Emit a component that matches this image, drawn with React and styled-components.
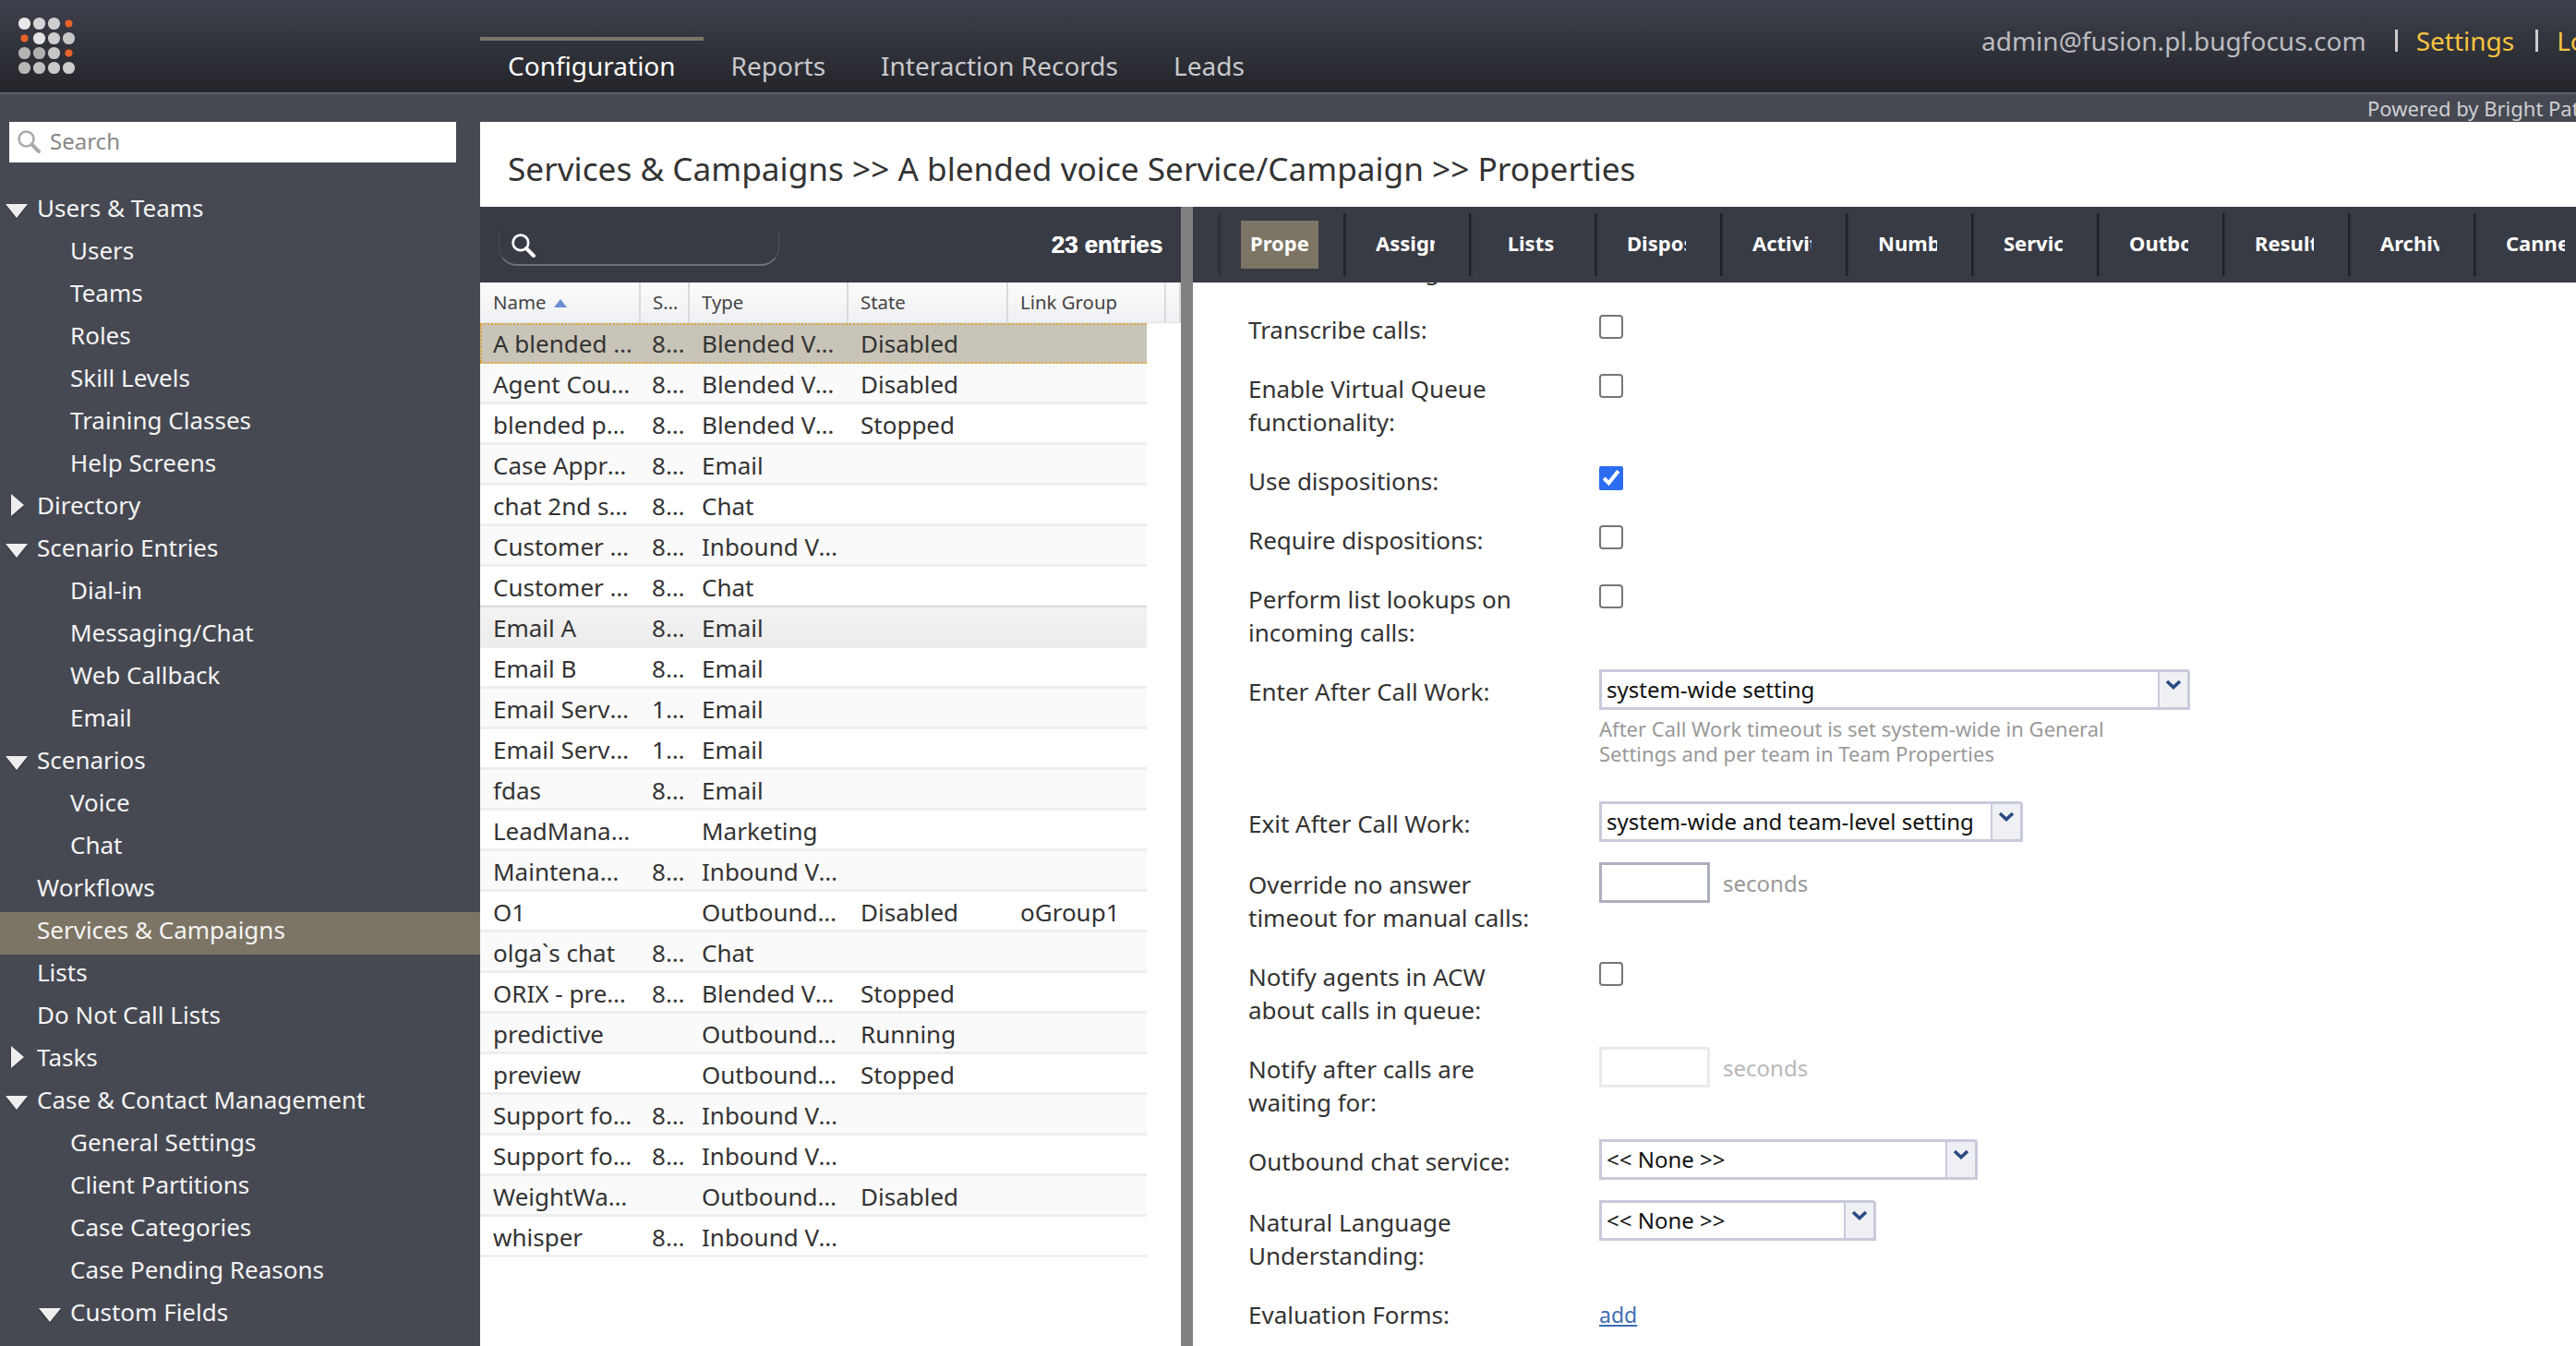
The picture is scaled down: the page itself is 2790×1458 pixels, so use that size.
import React from 'react';
import styled, { createGlobalStyle } from 'styled-components';

const GlobalStyle = createGlobalStyle`
  html, body {
    margin: 0;
    padding: 0;
    height: 100%;
    overflow: hidden;
    background: #fff;
  }
  * {
    box-sizing: border-box;
  }
`;

const Page = styled.div`
  width: 2790px;
  height: 1458px;
  display: flex;
  flex-direction: column;
  overflow: hidden;
  font-family: "Noto Sans", "Open Sans", sans-serif;
  color: #333;
`;

const Header = styled.header`
  flex: none;
  height: 102px;
  display: flex;
  background: linear-gradient(#3e414c, #24252a);
  border-bottom: 2px solid #5b5d64;
`;

const LogoCell = styled.div`
  flex: none;
  width: 520px;
  padding: 17px 0 0 18px;
`;

const Nav = styled.nav`
  flex: none;
  width: 1626px;
  display: flex;
  align-items: flex-end;
`;

const NavTab = styled.div`
  height: 60px;
  padding: 0 30px;
  border-top: 4px solid ${props => (props.$active ? '#7c7565' : 'transparent')};
  font-size: 28px;
  line-height: 55px;
  color: ${props => (props.$active ? '#fff' : '#c9c9cc')};
`;

const UserBox = styled.div`
  flex: none;
  display: flex;
  align-items: center;
  height: 36px;
  margin-top: 26px;
  font-size: 28px;
  white-space: nowrap;
  color: #bcbcc0;
`;

const UserSep = styled.span`
  width: 3px;
  height: 24px;
  margin: 0 20px 0 ${props => props.$gap}px;
  background: #ccc;
`;

const UserLink = styled.span`
  color: #f7c33f;
`;

const Strip = styled.div`
  flex: none;
  height: 30px;
  padding-left: 2564px;
  background: #464952;
  font-size: 22px;
  line-height: 30px;
  white-space: nowrap;
  color: #cfcfd2;
`;

const Body = styled.div`
  flex: 1;
  min-height: 0;
  display: flex;
`;

const Sidebar = styled.aside`
  flex: none;
  width: 520px;
  background: #464952;
  overflow: hidden;
`;

const SideSearch = styled.div`
  height: 44px;
  margin: 0 26px 30px 10px;
  padding: 0 0 3px 8px;
  display: flex;
  align-items: center;
  gap: 10px;
  background: #fff;
  font-size: 24px;
  color: #888;
`;

const TreeRow = styled.div`
  height: 46px;
  padding: 0 0 8px ${props => (props.$depth ? 42 : 6)}px;
  display: flex;
  align-items: center;
  font-size: 26px;
  white-space: nowrap;
  color: #f4f4f4;
  background: ${props => (props.$selected ? '#7c7565' : 'transparent')};
`;

const ArrowSlot = styled.span`
  flex: none;
  width: 34px;
  display: flex;
  align-items: center;
`;

const ArrowDown = styled.span`
  margin-top: 6px;
  border-left: 12px solid transparent;
  border-right: 12px solid transparent;
  border-top: 15px solid #eee;
  filter: drop-shadow(0 1px 1px rgba(0, 0, 0, 0.3));
`;

const ArrowRight = styled.span`
  margin-left: 6px;
  border-top: 12px solid transparent;
  border-bottom: 12px solid transparent;
  border-left: 14px solid #eee;
  filter: drop-shadow(0 1px 1px rgba(0, 0, 0, 0.3));
`;

const Main = styled.main`
  flex: 1;
  min-width: 0;
  display: flex;
  flex-direction: column;
`;

const Title = styled.h1`
  flex: none;
  height: 92px;
  margin: 0;
  padding-left: 30px;
  font-size: 35.2px;
  font-weight: 400;
  line-height: 101px;
  white-space: nowrap;
  color: #333;
`;

const Panes = styled.div`
  flex: 1;
  min-height: 0;
  display: flex;
`;

const ListPane = styled.section`
  flex: none;
  width: 759px;
  display: flex;
  flex-direction: column;
`;

const Splitter = styled.div`
  flex: none;
  width: 13px;
  background: #808080;
`;

const ListToolbar = styled.div`
  flex: none;
  height: 82px;
  padding: 0 20px;
  display: flex;
  align-items: center;
  justify-content: space-between;
  background: #383b44;
`;

const ListSearch = styled.div`
  width: 304px;
  height: 38px;
  margin-top: 8px;
  padding: 2px 0 0 12px;
  display: flex;
  align-items: flex-start;
  border-bottom: 2px solid #6f7177;
  border-left: 1px solid #4a4c54;
  border-right: 1px solid #55575e;
  border-radius: 0 0 20px 20px;
`;

const EntryCount = styled.div`
  font-family: "Liberation Sans", Arial, sans-serif;
  font-size: 25.8px;
  font-weight: 700;
  color: #fff;
  text-shadow: 0.5px 0 0 #fff;
`;

const HeadRow = styled.div`
  flex: none;
  height: 44px;
  display: grid;
  grid-template-columns: 174px 53px 172px 173px 171px 16px;
  background: linear-gradient(#fbfbfb, #f7f7f8 40%, #eef0f3);
  border-bottom: 1px solid #e2e2e2;
`;

const HeadCell = styled.div`
  padding: 0 0 2px 13px;
  display: flex;
  align-items: center;
  gap: 8px;
  overflow: hidden;
  font-size: 20.4px;
  color: #444;
  border-right: 2px solid #d9dadd;

  &:first-child {
    padding-left: 14px;
  }
`;

const HeadText = styled.span`
  overflow: hidden;
  white-space: nowrap;
  text-overflow: ellipsis;
`;

const SortMark = styled.span`
  flex: none;
  margin-top: 3px;
  border-left: 7px solid transparent;
  border-right: 7px solid transparent;
  border-bottom: 9px solid #6a8fd0;
`;

const Rows = styled.div`
  flex: 1;
  width: 722px;
`;

const rowBackground = props => {
  if (props.$selected) return '#c8c4b7';
  if (props.$hover) return 'linear-gradient(#f2f2f2, #ececec)';
  return props.$odd ? '#fafafa' : '#fff';
};

const Row = styled.div`
  position: relative;
  height: ${props => (props.$hover ? '46px' : '44px')};
  margin-top: ${props => (props.$hover ? '-2px' : '0')};
  padding-top: ${props => (props.$selected ? '0' : '2px')};
  display: grid;
  grid-template-columns: 174px 53px 172px 173px 150px;
  align-items: center;
  background: ${rowBackground};
  border-bottom: ${props => (props.$selected ? '2px dotted #e0a83a' : '3px solid #eeeeee')};
  border-top: ${props =>
    props.$selected ? '2px dotted #e0a83a' : props.$hover ? '2px solid #dddddd' : '0 none'};

  &::before {
    content: '';
    position: absolute;
    left: 0;
    top: 0;
    bottom: 0;
    border-left: ${props => (props.$selected ? '2px dotted #e0a83a' : '0 none')};
  }
`;

const Cell = styled.div`
  padding: 0 10px 0 13px;
  overflow: hidden;
  white-space: nowrap;
  text-overflow: ellipsis;
  font-size: 26px;
  line-height: 38px;
  color: #333;

  &:first-child {
    padding: 0 9px 0 14px;
  }

  &:nth-child(2) {
    padding: 0 6px 0 12px;
  }
`;

const DetailPane = styled.section`
  flex: 1;
  min-width: 0;
  display: flex;
  flex-direction: column;
  overflow: hidden;
`;

const TabBar = styled.div`
  position: relative;
  z-index: 1;
  flex: none;
  height: 82px;
  padding-left: 27px;
  display: flex;
  align-items: center;
  background: #383b44;
`;

const Tab = styled.div`
  flex: none;
  width: 136px;
  height: 68px;
  padding-left: 23px;
  display: flex;
  align-items: center;
  border-left: 2px solid ${props => (props.$first ? '#2f3138' : '#1e2024')};
  box-shadow: inset 2px 0 2px -1px rgba(0, 0, 0, 0.25);
`;

const TabBox = styled.div`
  width: 84px;
  height: 52px;
  padding: 0 10px 4px;
  display: flex;
  align-items: center;
  background: ${props => (props.$active ? '#7c7565' : 'transparent')};
`;

const TabText = styled.span`
  display: block;
  width: 64px;
  overflow: hidden;
  text-align: center;
  white-space: nowrap;
  font-size: 22px;
  font-weight: 700;
  color: #fff;
`;

const Scroller = styled.div`
  flex: 1;
  min-height: 0;
  overflow: hidden;
`;

const Form = styled.div`
  margin-top: -31px;
  padding-left: 60px;
  display: flex;
  flex-direction: column;
  gap: 28px;
`;

const FormRow = styled.div`
  display: grid;
  grid-template-columns: 380px 1fr;
`;

const Label = styled.div`
  width: 320px;
  font-size: 26px;
  line-height: 36px;
  color: #333;
`;

const Control = styled.div`
  display: flex;
  flex-direction: column;
  align-items: flex-start;
`;

const Check = styled.input`
  width: 26px;
  height: 26px;
  margin: 2px 0 0;
  accent-color: #2b6cf0;

  &:not(:checked) {
    appearance: none;
    background: #fff;
    border: 2px solid #767676;
    border-radius: 4px;
  }
`;

const SelectBox = styled.div`
  width: ${props => props.$width}px;
  height: 44px;
  margin-top: -6px;
  display: flex;
  align-items: stretch;
  background: #fff;
  border: 3px solid #c8cadc;
  border-radius: 0 4px 0 0;
`;

const SelectValue = styled.div`
  flex: 1;
  padding-left: 5px;
  font-size: 24px;
  line-height: 38px;
  white-space: nowrap;
  color: #111;
`;

const SelectButton = styled.div`
  flex: none;
  width: 32px;
  padding-top: 8px;
  display: flex;
  justify-content: center;
  align-items: flex-start;
  background: #eff0f3;
  border-left: 2px solid #c8cadc;
`;

const Help = styled.div`
  margin: 7px 0 17px;
  font-size: 22px;
  line-height: 26.5px;
  color: #999;
`;

const SecondsRow = styled.div`
  margin-top: -6px;
  display: flex;
  align-items: center;
  gap: 14px;
`;

const NumberBox = styled.div`
  width: 120px;
  height: 44px;
  background: #fff;
  border: 3px solid ${props => (props.$disabled ? '#e9e9ee' : '#adafc0')};
`;

const Seconds = styled.span`
  font-size: 24px;
  color: ${props => (props.$disabled ? '#b8b8b8' : '#999')};
`;

const AddLink = styled.a`
  font-size: 23px;
  line-height: 36px;
  color: #3f6db3;
  text-decoration: underline;
`;

const Logo = () => {
  const orange = ['3-0', '0-1', '3-2'];
  const shade = [
    ['#e8e8e8', '#d4d4d4', '#cfcfcf'],
    [null, '#e4e4e4', '#cdcdcd', '#c6c6c6'],
    ['#b4b4b4', '#b0b0b0', '#c6c6c6'],
    ['#b8b8b8', '#c0c0c0', '#c8c8c8', '#cccccc'],
  ];
  const dots = [];
  for (let y = 0; y < 4; y++) {
    for (let x = 0; x < 4; x++) {
      const hot = orange.includes(`${x}-${y}`);
      dots.push(
        <circle
          key={`${x}-${y}`}
          cx={8.5 + x * 16}
          cy={8.5 + y * 16}
          r={hot ? 4 : 6.6}
          fill={hot ? '#e8632a' : shade[y][x]}
        />
      );
    }
  }
  return (
    <svg width="66" height="66" viewBox="0 0 66 66">
      {dots}
    </svg>
  );
};

const Magnifier = ({ color, size }) => (
  <svg width={size} height={size} viewBox="0 0 26 26" fill="none" stroke={color}>
    <circle cx="10.5" cy="10.5" r="8" strokeWidth="2.6" />
    <path d="M16.5 16.5 L24 24" strokeWidth="4" strokeLinecap="round" />
  </svg>
);

const Chevron = () => (
  <svg width="18" height="12" viewBox="0 0 18 12" fill="none">
    <path d="M2 2 L9 8.5 L16 2" stroke="#2b4a82" strokeWidth="3.6" />
  </svg>
);

const tree = [
  { text: 'Users & Teams', arrow: 'down' },
  { text: 'Users', depth: 1 },
  { text: 'Teams', depth: 1 },
  { text: 'Roles', depth: 1 },
  { text: 'Skill Levels', depth: 1 },
  { text: 'Training Classes', depth: 1 },
  { text: 'Help Screens', depth: 1 },
  { text: 'Directory', arrow: 'right' },
  { text: 'Scenario Entries', arrow: 'down' },
  { text: 'Dial-in', depth: 1 },
  { text: 'Messaging/Chat', depth: 1 },
  { text: 'Web Callback', depth: 1 },
  { text: 'Email', depth: 1 },
  { text: 'Scenarios', arrow: 'down' },
  { text: 'Voice', depth: 1 },
  { text: 'Chat', depth: 1 },
  { text: 'Workflows' },
  { text: 'Services & Campaigns', selected: true },
  { text: 'Lists' },
  { text: 'Do Not Call Lists' },
  { text: 'Tasks', arrow: 'right' },
  { text: 'Case & Contact Management', arrow: 'down' },
  { text: 'General Settings', depth: 1 },
  { text: 'Client Partitions', depth: 1 },
  { text: 'Case Categories', depth: 1 },
  { text: 'Case Pending Reasons', depth: 1 },
  { text: 'Custom Fields', depth: 1, arrow: 'down' },
];

const entries = [
  ['A blended voice Service/Campaign', '8001', 'Blended Voice', 'Disabled', ''],
  ['Agent Coustomer', '8002', 'Blended Voice', 'Disabled', ''],
  ['blended preview', '8003', 'Blended Voice', 'Stopped', ''],
  ['Case Approval', '8004', 'Email', '', ''],
  ['chat 2nd service', '8005', 'Chat', '', ''],
  ['Customer Service', '8006', 'Inbound Voice', '', ''],
  ['Customer Service Chat', '8007', 'Chat', '', ''],
  ['Email A', '8008', 'Email', '', ''],
  ['Email B', '8009', 'Email', '', ''],
  ['Email Service 1', '1001', 'Email', '', ''],
  ['Email Service 2', '1002', 'Email', '', ''],
  ['fdas', '8010', 'Email', '', ''],
  ['LeadManagement', '', 'Marketing', '', ''],
  ['Maintenance', '8011', 'Inbound Voice', '', ''],
  ['O1', '', 'Outbound Voice', 'Disabled', 'oGroup1'],
  ['olga`s chat', '8012', 'Chat', '', ''],
  ['ORIX - predictive', '8013', 'Blended Voice', 'Stopped', ''],
  ['predictive', '', 'Outbound Voice', 'Running', ''],
  ['preview', '', 'Outbound Voice', 'Stopped', ''],
  ['Support for A', '8014', 'Inbound Voice', '', ''],
  ['Support for B', '8015', 'Inbound Voice', '', ''],
  ['WeightWatchers', '', 'Outbound Voice', 'Disabled', ''],
  ['whisper', '8016', 'Inbound Voice', '', ''],
];

const tabs = [
  'Properties',
  'Assignments',
  'Lists',
  'Dispositions',
  'Activity',
  'Numbers',
  'Services',
  'Outbound',
  'Results',
  'Archive',
  'Canned',
];

const SelectField = ({ width, value }) => (
  <SelectBox $width={width}>
    <SelectValue>{value}</SelectValue>
    <SelectButton>
      <Chevron />
    </SelectButton>
  </SelectBox>
);

const App = () => (
  <Page>
    <GlobalStyle />
    <Header>
      <LogoCell>
        <Logo />
      </LogoCell>
      <Nav>
        <NavTab $active>Configuration</NavTab>
        <NavTab>Reports</NavTab>
        <NavTab>Interaction Records</NavTab>
        <NavTab>Leads</NavTab>
      </Nav>
      <UserBox>
        admin@fusion.pl.bugfocus.com
        <UserSep $gap={31} />
        <UserLink>Settings</UserLink>
        <UserSep $gap={23} />
        <UserLink>Logout</UserLink>
      </UserBox>
    </Header>
    <Strip>Powered by Bright Pattern</Strip>
    <Body>
      <Sidebar>
        <SideSearch>
          <Magnifier color="#aaa" size={26} />
          Search
        </SideSearch>
        {tree.map(item => (
          <TreeRow key={item.text} $depth={item.depth} $selected={item.selected}>
            <ArrowSlot>
              {item.arrow === 'down' && <ArrowDown />}
              {item.arrow === 'right' && <ArrowRight />}
            </ArrowSlot>
            {item.text}
          </TreeRow>
        ))}
      </Sidebar>
      <Main>
        <Title>Services &amp; Campaigns &gt;&gt; A blended voice Service/Campaign &gt;&gt; Properties</Title>
        <Panes>
          <ListPane>
            <ListToolbar>
              <ListSearch>
                <Magnifier color="#fff" size={27} />
              </ListSearch>
              <EntryCount>23 entries</EntryCount>
            </ListToolbar>
            <HeadRow>
              <HeadCell>
                <HeadText>Name</HeadText>
                <SortMark />
              </HeadCell>
              <HeadCell>
                <HeadText>Service</HeadText>
              </HeadCell>
              <HeadCell>
                <HeadText>Type</HeadText>
              </HeadCell>
              <HeadCell>
                <HeadText>State</HeadText>
              </HeadCell>
              <HeadCell>
                <HeadText>Link Group</HeadText>
              </HeadCell>
              <HeadCell />
            </HeadRow>
            <Rows>
              {entries.map((entry, index) => (
                <Row
                  key={entry[0]}
                  $selected={index === 0}
                  $hover={index === 7}
                  $odd={index % 2 === 1}
                >
                  {entry.map((value, col) => (
                    <Cell key={col}>{value}</Cell>
                  ))}
                </Row>
              ))}
            </Rows>
          </ListPane>
          <Splitter />
          <DetailPane>
            <TabBar>
              {tabs.map((tab, index) => (
                <Tab key={tab} $first={index === 0}>
                  <TabBox $active={index === 0}>
                    <TabText>{tab}</TabText>
                  </TabBox>
                </Tab>
              ))}
            </TabBar>
            <Scroller>
              <Form>
                <FormRow>
                  <Label>Enable recording:</Label>
                  <Control />
                </FormRow>
                <FormRow>
                  <Label>Transcribe calls:</Label>
                  <Control>
                    <Check type="checkbox" readOnly />
                  </Control>
                </FormRow>
                <FormRow>
                  <Label>Enable Virtual Queue functionality:</Label>
                  <Control>
                    <Check type="checkbox" readOnly />
                  </Control>
                </FormRow>
                <FormRow>
                  <Label>Use dispositions:</Label>
                  <Control>
                    <Check type="checkbox" checked readOnly />
                  </Control>
                </FormRow>
                <FormRow>
                  <Label>Require dispositions:</Label>
                  <Control>
                    <Check type="checkbox" readOnly />
                  </Control>
                </FormRow>
                <FormRow>
                  <Label>Perform list lookups on incoming calls:</Label>
                  <Control>
                    <Check type="checkbox" readOnly />
                  </Control>
                </FormRow>
                <FormRow>
                  <Label>Enter After Call Work:</Label>
                  <Control>
                    <SelectField width={640} value="system-wide setting" />
                    <Help>
                      After Call Work timeout is set system-wide in General
                      <br />
                      Settings and per team in Team Properties
                    </Help>
                  </Control>
                </FormRow>
                <FormRow>
                  <Label>Exit After Call Work:</Label>
                  <Control>
                    <SelectField width={459} value="system-wide and team-level setting" />
                  </Control>
                </FormRow>
                <FormRow>
                  <Label>Override no answer timeout for manual calls:</Label>
                  <Control>
                    <SecondsRow>
                      <NumberBox />
                      <Seconds>seconds</Seconds>
                    </SecondsRow>
                  </Control>
                </FormRow>
                <FormRow>
                  <Label>Notify agents in ACW about calls in queue:</Label>
                  <Control>
                    <Check type="checkbox" readOnly />
                  </Control>
                </FormRow>
                <FormRow>
                  <Label>Notify after calls are waiting for:</Label>
                  <Control>
                    <SecondsRow>
                      <NumberBox $disabled />
                      <Seconds $disabled>seconds</Seconds>
                    </SecondsRow>
                  </Control>
                </FormRow>
                <FormRow>
                  <Label>Outbound chat service:</Label>
                  <Control>
                    <SelectField width={410} value="<< None >>" />
                  </Control>
                </FormRow>
                <FormRow>
                  <Label>Natural Language Understanding:</Label>
                  <Control>
                    <SelectField width={300} value="<< None >>" />
                  </Control>
                </FormRow>
                <FormRow>
                  <Label>Evaluation Forms:</Label>
                  <Control>
                    <AddLink>add</AddLink>
                  </Control>
                </FormRow>
              </Form>
            </Scroller>
          </DetailPane>
        </Panes>
      </Main>
    </Body>
  </Page>
);

export default App;
